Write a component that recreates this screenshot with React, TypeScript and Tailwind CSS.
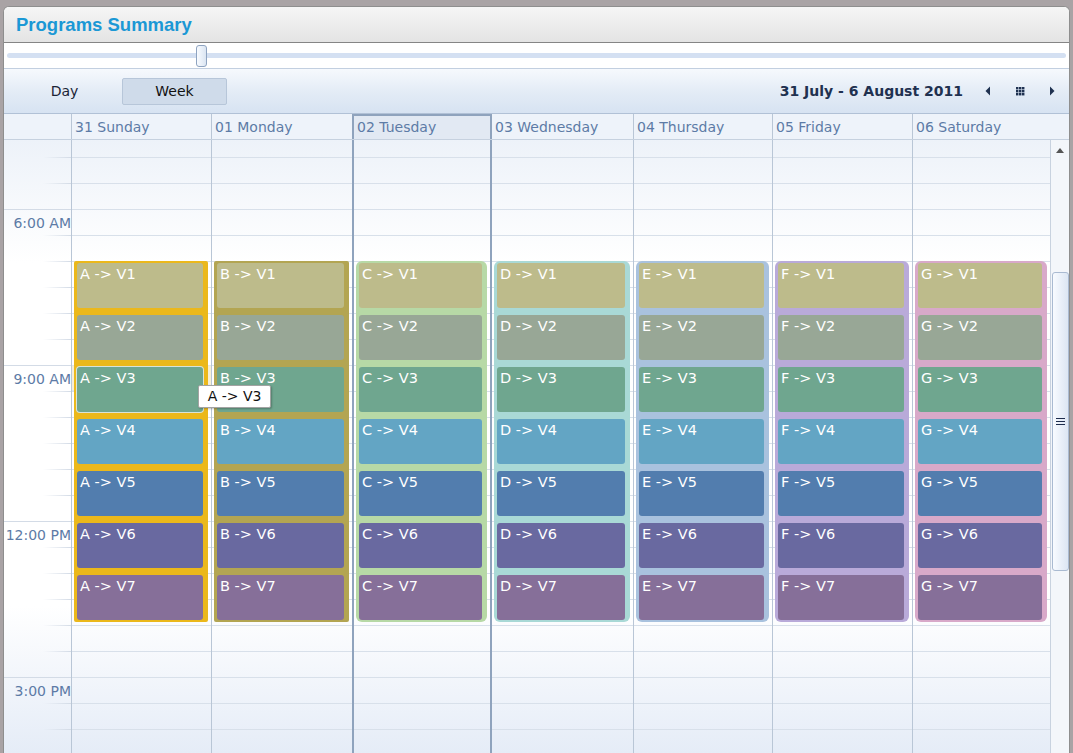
const GRID = "grid grid-cols-[67px_140px_141px_140px_141px_139px_140px_138px_1fr]";

const days = [
  { label: "31 Sunday", letter: "A", box: "bg-[#ebb81b] rounded-[2px]", cell: "border-l border-[#b9c6d6]" },
  { label: "01 Monday", letter: "B", box: "bg-[#b3a552] rounded-[2px]", cell: "border-l border-[#b9c6d6]" },
  { label: "02 Tuesday", letter: "C", box: "bg-[#b7d9a6] rounded-[6px]", cell: "border-x-2 border-[#8fa3bd]" },
  { label: "03 Wednesday", letter: "D", box: "bg-[#a9d9d6] rounded-[6px]", cell: "" },
  { label: "04 Thursday", letter: "E", box: "bg-[#a9c2de] rounded-[6px]", cell: "border-l border-[#b9c6d6]" },
  { label: "05 Friday", letter: "F", box: "bg-[#b9aad9] rounded-[6px]", cell: "border-l border-[#b9c6d6]" },
  { label: "06 Saturday", letter: "G", box: "bg-[#d8a9c9] rounded-[6px]", cell: "border-l border-[#b9c6d6]" },
];

const eventColors = [
  "bg-[#bdbb8b]",
  "bg-[#98a796]",
  "bg-[#6fa68f]",
  "bg-[#63a5c4]",
  "bg-[#527dae]",
  "bg-[#6969a0]",
  "bg-[#866f99]",
];

const labels: Record<number, string> = { 2: "6:00 AM", 8: "9:00 AM", 14: "12:00 PM", 20: "3:00 PM" };

function TimeGutter() {
  return (
    <div className="flex flex-col overflow-hidden">
      <div className="h-[17px] shrink-0" />
      {Array.from({ length: 23 }, (_, k) => (
        <div key={k} className="h-[26px] shrink-0 flex flex-col">
          {k % 6 === 2 ? (
            <div className="h-px w-full bg-[#d3dbe6]" />
          ) : (
            <div className="h-px w-[28px] ml-auto bg-gradient-to-r from-transparent to-[#d3dbe6]" />
          )}
          <div className="flex-1 flex items-center justify-end pt-[1px] text-[#5d7ba6] whitespace-nowrap">
            {labels[k] ?? ""}
          </div>
        </div>
      ))}
    </div>
  );
}

function DayColumn({ day, index }: { day: (typeof days)[number]; index: number }) {
  return (
    <div
      className={`relative overflow-hidden pt-[121px] bg-[linear-gradient(180deg,transparent_25px,#d8e0ea_25px)] bg-[length:100%_26px] bg-[position:0_-8px] ${day.cell}`}
    >
      {index === 0 && (
        <div className="absolute top-[225px] left-0 right-0 h-[26px] bg-[#f6efd7] border-y border-[#dfe6ef]" />
      )}
      <div className={`relative ml-[2px] mr-[3px] pl-[3px] pr-[5px] py-[2px] flex flex-col gap-[7px] ${day.box}`}>
        {eventColors.map((c, i) => (
          <div
            key={i}
            className={`relative z-10 h-[45px] rounded-[3px] ${c} px-[3px] pt-[3px] leading-[17px] text-[14.5px] text-white whitespace-nowrap ${
              index === 0 && i === 2 ? "ring-1 ring-[#d9e3d8]" : ""
            }`}
          >
            {day.letter} -&gt; V{i + 1}
          </div>
        ))}
      </div>
    </div>
  );
}

function Triangle({ dir }: { dir: "left" | "right" }) {
  return (
    <svg width="6" height="10" viewBox="0 0 6 10">
      <polygon points={dir === "left" ? "5,0.5 5,9.5 0.5,5" : "1,0.5 1,9.5 5.5,5"} fill="#1f3150" />
    </svg>
  );
}

function GridIcon() {
  return (
    <svg width="9" height="9" viewBox="0 0 9 9">
      <rect x="0" y="0" width="9" height="9" fill="#d8e3f1" />
      {[0, 3, 6].map((y) =>
        [0, 3, 6].map((x) => <rect key={`${x}-${y}`} x={x} y={y} width="2.4" height="2.4" fill="#1f3150" />)
      )}
    </svg>
  );
}

export default function App() {
  return (
    <div className="relative w-[1073px] h-[753px] overflow-hidden bg-[#a9a3a5] pt-[6px] pl-[3px] pr-[3px] font-['DejaVu_Sans',sans-serif] text-[14px]">
      <div className="h-full flex flex-col bg-white border-x border-t border-[#8e8e8e] rounded-t-[6px] overflow-hidden">
        {/* title */}
        <div className="h-[36px] shrink-0 flex items-center pl-[12px] bg-gradient-to-b from-[#f5f5f5] to-[#e4e4e4] border-b border-[#858585]">
          <span className="font-['Liberation_Sans',sans-serif] font-bold text-[18.5px] text-[#1b98d5]">
            Programs Summary
          </span>
        </div>

        {/* slider */}
        <div className="h-[26px] shrink-0 relative flex items-center px-[3px] border-b border-[#c2cfe0]">
          <div className="w-full h-[5px] rounded-full bg-[#d4e0f2]" />
          <div className="absolute left-[192px] top-[2px] w-[11px] h-[22px] rounded-[3px] border border-[#8ea3c0] bg-gradient-to-r from-[#f8fbff] to-[#dbe5f2]" />
        </div>

        {/* toolbar */}
        <div className="h-[45px] shrink-0 flex items-center pl-[8px] pr-[1px] bg-gradient-to-b from-[#f6f9fd] via-[#e4ecf6] to-[#d7e3f2] border-b border-[#b1c1d6]">
          <div className="w-[105px] h-[27px] flex items-center justify-center text-[#1a2436]">Day</div>
          <div className="ml-[5px] w-[105px] h-[27px] flex items-center justify-center rounded-[2px] border border-[#b7c6d9] bg-[#cfdbea] text-[#111]">
            Week
          </div>
          <div className="ml-auto mr-[9px] font-bold text-[#1f3150]">31 July - 6 August 2011</div>
          <div className="w-[32px] flex justify-center">
            <Triangle dir="left" />
          </div>
          <div className="w-[32px] flex justify-center">
            <GridIcon />
          </div>
          <div className="w-[32px] flex justify-center">
            <Triangle dir="right" />
          </div>
        </div>

        {/* day headers */}
        <div className={`${GRID} h-[26px] shrink-0 bg-[#eef3fa] border-b border-[#c6d1df] text-[#5d7ba6]`}>
          <div />
          {days.map((d, i) => (
            <div
              key={d.label}
              className={`flex items-center pl-[3px] pt-[2px] whitespace-nowrap ${d.cell} ${
                i === 2 ? "bg-[#e2e9f3] shadow-[inset_0_2px_0_#8fa3bd]" : ""
              }`}
            >
              {d.label}
            </div>
          ))}
          <div />
        </div>

        {/* body */}
        <div
          className={`${GRID} flex-1 min-h-0 overflow-hidden bg-[linear-gradient(180deg,#edf2f9_0%,#ffffff_20%,#ffffff_76%,#e5ecf7_100%)]`}
        >
          <TimeGutter />
          {days.map((d, i) => (
            <DayColumn key={d.label} day={d} index={i} />
          ))}
          {/* scrollbar */}
          <div className="relative border-l border-[#c8d2df] bg-[#f3f6fa]">
            <div className="flex justify-center pt-[8px]">
              <svg width="8" height="5" viewBox="0 0 8 5">
                <polygon points="0,5 8,5 4,0" fill="#555" />
              </svg>
            </div>
            <div className="absolute left-[1px] right-0 top-[132px] h-[299px] rounded-[3px] border border-[#a9bad1] bg-gradient-to-r from-[#f8fbff] to-[#dce6f3] flex flex-col items-center justify-center gap-[2px]">
              <div className="w-[9px] h-px bg-[#1d2c4c]" />
              <div className="w-[9px] h-px bg-[#1d2c4c]" />
              <div className="w-[9px] h-px bg-[#1d2c4c]" />
            </div>
          </div>
        </div>
      </div>

      {/* tooltip */}
      <div className="absolute z-50 left-[198px] top-[385px] w-[73px] h-[23px] flex items-center justify-center bg-white border border-[#a3a3a3] rounded-[2px] shadow-[1px_1px_2px_rgba(0,0,0,0.25)] text-[#111] whitespace-nowrap">
        A -&gt; V3
      </div>
    </div>
  );
}
